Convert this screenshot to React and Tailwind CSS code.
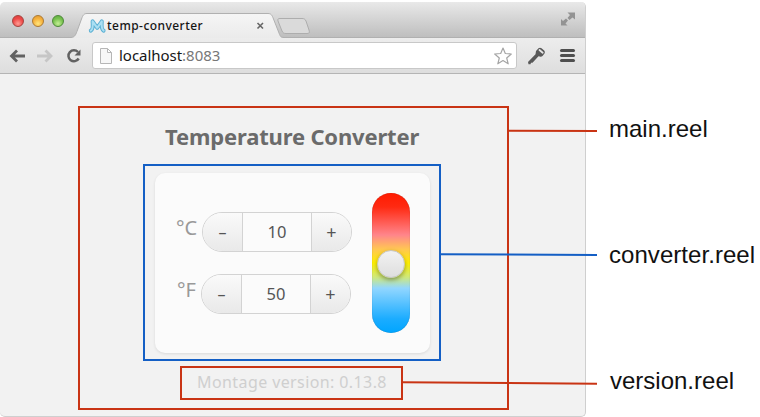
function TitleBar() {
  return (
    <div className="relative flex h-9 shrink-0 items-center bg-linear-to-b from-[#e9e9e9] to-[#bdbdbd]">
      <div className="flex gap-2 pl-3 pt-0.5">
        <span className="size-3 rounded-full border border-[#a5433e] bg-[radial-gradient(circle_at_50%_75%,#ff9c94,#ee4a48_55%,#d83c3c)]" />
        <span className="size-3 rounded-full border border-[#ad7a32] bg-[radial-gradient(circle_at_50%_75%,#ffe57c,#f6b13c_55%,#dd9632)]" />
        <span className="size-3 rounded-full border border-[#4d8939] bg-[radial-gradient(circle_at_50%_75%,#c4ee95,#78c24f_55%,#5ca83e)]" />
      </div>
      <svg className="absolute left-0 top-0 h-9 w-[585px]" viewBox="0 0 585 36" fill="none">
        <defs>
          <linearGradient id="tab" x1="0" y1="12" x2="0" y2="36" gradientUnits="userSpaceOnUse">
            <stop stopColor="#f5f5f5" />
            <stop offset="1" stopColor="#ebebeb" />
          </linearGradient>
        </defs>
        <path d="M0 35.5H71C75 35.5 76 32 77.500 28L81.500 17C83 13 84 11.500 87 11.500H268C271 11.500 272 13 273.500 17L279 31C280.500 35 281 35.500 284 35.500H585V36H0Z" fill="url(#tab)" />
        <path d="M0 35.500H71C75 35.500 76 32 77.500 28L81.500 17C83 13 84 11.500 87 11.500H268C271 11.500 272 13 273.500 17L279 31C280.500 35 281 35.500 284 35.500H585" stroke="#b0b0b0" />
        <path d="M280 16.500H302C304 16.500 305 17 306 19L309 28C310 31 309 31.500 307 31.500H286C284 31.500 283 31 282 29L278 19C277.500 17 278 16.500 280 16.500Z" fill="#dadada" stroke="#adadad" />
        <g strokeLinecap="round" strokeLinejoin="round">
          <path d="M90.800 28.600Q93.300 27.500 92.600 19.300L97.200 25.800L101.800 19.300Q101.200 27.500 103.600 28.600" stroke="#5eb1d3" strokeWidth="4" />
          <path d="M90.800 28.600Q93.300 27.500 92.600 19.300L97.200 25.800L101.800 19.300Q101.200 27.500 103.600 28.600" stroke="#a9dff3" strokeWidth="2" />
        </g>
        <path d="m257.500 21 5.500 5.500m0-5.500-5.500 5.500" stroke="#666" strokeWidth="1.600" />
        <g fill="#939393">
          <path d="M567.500 10.500H575V17.500L572.500 15.500L569.500 18L567.500 16L570 13Z" />
          <path d="M561 17L563 19L566 16.500L568 18.500L565.500 21.500L567.500 23.500H561Z" />
        </g>
      </svg>
      <span className="absolute left-[107px] top-4 whitespace-nowrap font-['Noto_Sans',sans-serif] text-[12px] leading-4 font-medium tracking-[0.45px] text-[#151515]">temp-converter</span>
    </div>
  );
}

function Toolbar() {
  return (
    <div className="flex h-9 shrink-0 items-center border-b border-[#b5b5b5] bg-linear-to-b from-[#ededed] to-[#dedede] pl-[9px]">
      <svg className="h-[18px] w-[75px] shrink-0" viewBox="0 0 75 18" fill="none">
        <path d="M2 9H16M8 3.500L2.500 9L8 14.500" stroke="#626262" strokeWidth="2.800" />
        <path d="M28 9H42M36.500 3.500L42 9L36.500 14.500" stroke="#c6c6c6" strokeWidth="2.800" />
        <path d="M69 5A5.500 5.500 0 1 0 69.700 11.500" stroke="#626262" strokeWidth="2.500" />
        <path d="M71.500 2.500V8.500H65.500Z" fill="#626262" />
      </svg>
      <div className="ml-2 flex h-[27px] w-[425px] shrink-0 items-center rounded-[3px] border border-[#c8c8c8] bg-white pl-[7px] pr-1">
        <svg className="h-4 w-3 shrink-0" viewBox="0 0 12 16" fill="#f7f7f7" stroke="#b6b6b6">
          <path d="M.5.5H7.500L11.500 4.500V15.500H.5ZM7.500.5V4.500H11.500" />
        </svg>
        <span className="ml-[7px] pb-px font-['Noto_Sans',sans-serif] text-[15px] leading-5 tracking-[-0.03px] text-[#161616]">
          localhost<span className="text-[#777]">:8083</span>
        </span>
        <svg className="ml-auto size-[18px] shrink-0" viewBox="0 0 18 18" fill="white" stroke="#a5a5a5" strokeWidth="1.200" strokeLinejoin="round">
          <path d="M9 1L11.300 6.500L17.300 7L12.700 11L14.200 16.800L9 13.600L3.800 16.800L5.300 11L.7 7L6.700 6.500Z" />
        </svg>
      </div>
      <svg className="ml-2.5 h-[18px] w-[19px] shrink-0" viewBox="0 0 19 18">
        <path d="M9 4L11.500 1.200Q13 .2 14.500 1.200L17.200 3.500Q18.500 5 17.500 6.500L15.500 9Q14.300 10.200 12.800 9.600L11.500 9.300L5.500 15.800L4 15.800L3.500 17.200L1.500 17.200L1 15L8.500 7.200Z" fill="#595959" />
        <path d="M12.500 3L15.700 5.700" stroke="#e5e5e5" strokeWidth="1.800" strokeLinecap="round" />
      </svg>
      <div className="ml-3.5 flex w-[15px] flex-col gap-0.5">
        <span className="h-[3px] rounded-sm bg-[#4f4f4f]" />
        <span className="h-[3px] rounded-sm bg-[#4f4f4f]" />
        <span className="h-[3px] rounded-sm bg-[#4f4f4f]" />
      </div>
    </div>
  );
}

function Stepper({ value }) {
  return (
    <div className="flex h-10 w-[150px] overflow-hidden rounded-full border border-[#d3d3d3] bg-[#fbfbfb] font-['Noto_Sans',sans-serif] text-[#555]">
      <span className="flex w-10 items-center justify-center border-r border-[#d3d3d3] bg-linear-to-b from-[#fafafa] to-[#e9e9e9] text-[16px]">–</span>
      <span className="flex flex-1 items-center justify-center text-[16.5px]">{value}</span>
      <span className="flex w-10 items-center justify-center border-l border-[#d3d3d3] bg-linear-to-b from-[#fafafa] to-[#e9e9e9] text-[18px]">+</span>
    </div>
  );
}

function Converter() {
  return (
    <div className="ml-[63px] mt-3 h-[197px] w-[298px] border-2 border-[#145fc5] pl-2.5 pt-[7px]">
      <div className="flex h-[180px] w-[275px] rounded-[10px] bg-[#fbfbfb] shadow-[0_1px_3px_rgba(0,0,0,0.1)]">
        <div className="flex w-[217px] flex-col gap-[22px] pt-[39px]">
          <div className="flex">
            <span className="w-[47px] pl-[21px] pt-0.5 font-['Noto_Sans',sans-serif] text-[20px] leading-7 text-[#999]">°C</span>
            <Stepper value="10" />
          </div>
          <div className="flex">
            <span className="w-[46px] pl-[22px] pt-0.5 font-['Noto_Sans',sans-serif] text-[20px] leading-7 text-[#999]">°F</span>
            <Stepper value="50" />
          </div>
        </div>
        <div className="mt-5 flex h-[140px] w-[38px] justify-center rounded-full bg-[linear-gradient(#ff1b00_0%,#ff2a12_10%,#ff858b_30%,#ffc653_40%,#fff000_50%,#d0e979_60%,#91d6ff_68%,#1bacff_90%,#00a5ff_100%)] pt-[57px] shadow-[inset_0_0_1px_rgba(0,0,0,0.35)]">
          <span className="size-7 rounded-full border border-[#c6c6c6] bg-linear-to-b from-[#f2f2f2] to-[#dedede] shadow-[0_2px_4px_rgba(0,0,0,0.35)]" />
        </div>
      </div>
    </div>
  );
}

function BrowserWindow() {
  return (
    <div className="flex h-[415px] w-[586px] flex-col overflow-hidden rounded-[5px] border-r border-b border-[#cfcfcf] bg-[#f2f2f2]">
      <TitleBar />
      <Toolbar />
      <div className="ml-[78px] mt-8 h-[304px] w-[431px] border-2 border-[#c93414]">
        <h1 className="mt-3 ml-[85px] whitespace-nowrap font-['Noto_Sans',sans-serif] text-[22px] leading-8 font-bold tracking-[-0.17px] text-[#6b6b6b]">Temperature Converter</h1>
        <Converter />
        <div className="ml-[100px] mt-[5px] flex h-[34px] w-[223px] items-center justify-center border-2 border-[#c93414] pb-0.5 pl-px font-['Noto_Sans',sans-serif] text-[16px] tracking-[0.4px] whitespace-nowrap text-[#cfcfcf]">Montage version: 0.13.8</div>
      </div>
    </div>
  );
}

export default function App() {
  return (
    <div className="relative flex h-[417px] w-[760px] overflow-hidden bg-white pt-[2px]">
      <BrowserWindow />
      <div className="flex flex-col pl-[23px] pt-[113px] font-['Liberation_Sans',Arial,sans-serif] text-[24px] leading-7 text-[#111]">
        <span>main.reel</span>
        <span className="mt-[98px] tracking-[0.05px]">converter.reel</span>
        <span className="mt-[98px] pl-px">version.reel</span>
      </div>
      <svg className="pointer-events-none absolute inset-0 h-[417px] w-[760px]" viewBox="0 0 760 417" strokeWidth="2">
        <path d="M508 130.700L597 131" stroke="#c93414" />
        <path d="M441 254.200L597 255" stroke="#145fc5" />
        <path d="M402 382.200L597 383.700" stroke="#c93414" />
      </svg>
    </div>
  );
}
